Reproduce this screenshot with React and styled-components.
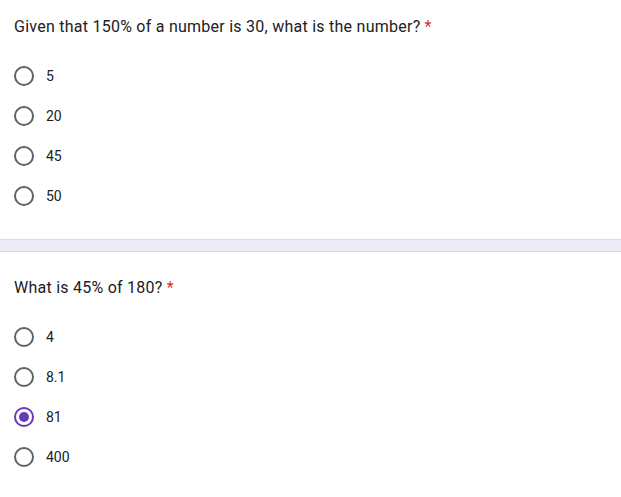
import React from "react";
import styled, { createGlobalStyle } from "styled-components";

const GlobalStyle = createGlobalStyle`
  body {
    margin: 0;
    background: #fff;
    font-family: Roboto, "Liberation Sans", sans-serif;
  }
`;

const Page = styled.div`
  width: 621px;
  display: flex;
  flex-direction: column;
`;

const Card = styled.div`
  background: #fff;
  padding: ${(p) => (p.$first ? "15px 14px 23px" : "24px 14px 24px")};
  display: flex;
  flex-direction: column;
`;

const Divider = styled.div`
  height: 11px;
  background: #ede9f7;
  border-top: 1px solid #dadce0;
  border-bottom: 1px solid #dadce0;
`;

const Question = styled.div`
  font-size: 16px;
  line-height: 24px;
  letter-spacing: 0.25px;
  color: #202124;
  margin-bottom: 17px;
`;

const Required = styled.span`
  color: #d93025;
  margin-left: 4px;
`;

const Options = styled.div`
  display: flex;
  flex-direction: column;
`;

const Option = styled.label`
  height: 40px;
  display: flex;
  align-items: center;
  gap: 12px;
  font-size: 14px;
  color: #202124;
  cursor: pointer;
`;

const Radio = styled.span`
  width: 20px;
  height: 20px;
  box-sizing: border-box;
  border-radius: 50%;
  border: 2px solid ${(p) => (p.$checked ? "#673ab7" : "#5f6368")};
  display: flex;
  align-items: center;
  justify-content: center;

  &::after {
    content: "";
    width: 10px;
    height: 10px;
    border-radius: 50%;
    background: #673ab7;
    display: ${(p) => (p.$checked ? "block" : "none")};
  }
`;

const questions = [
  {
    text: "Given that 150% of a number is 30, what is the number?",
    options: ["5", "20", "45", "50"],
    selected: null,
  },
  {
    text: "What is 45% of 180?",
    options: ["4", "8.1", "81", "400"],
    selected: "81",
  },
];

export default function App() {
  return (
    <Page>
      <GlobalStyle />
      {questions.map((q, i) => (
        <React.Fragment key={q.text}>
          {i > 0 && <Divider />}
          <Card $first={i === 0}>
            <Question>
              {q.text}
              <Required>*</Required>
            </Question>
            <Options>
              {q.options.map((o) => (
                <Option key={o}>
                  <Radio $checked={q.selected === o} />
                  {o}
                </Option>
              ))}
            </Options>
          </Card>
        </React.Fragment>
      ))}
    </Page>
  );
}
